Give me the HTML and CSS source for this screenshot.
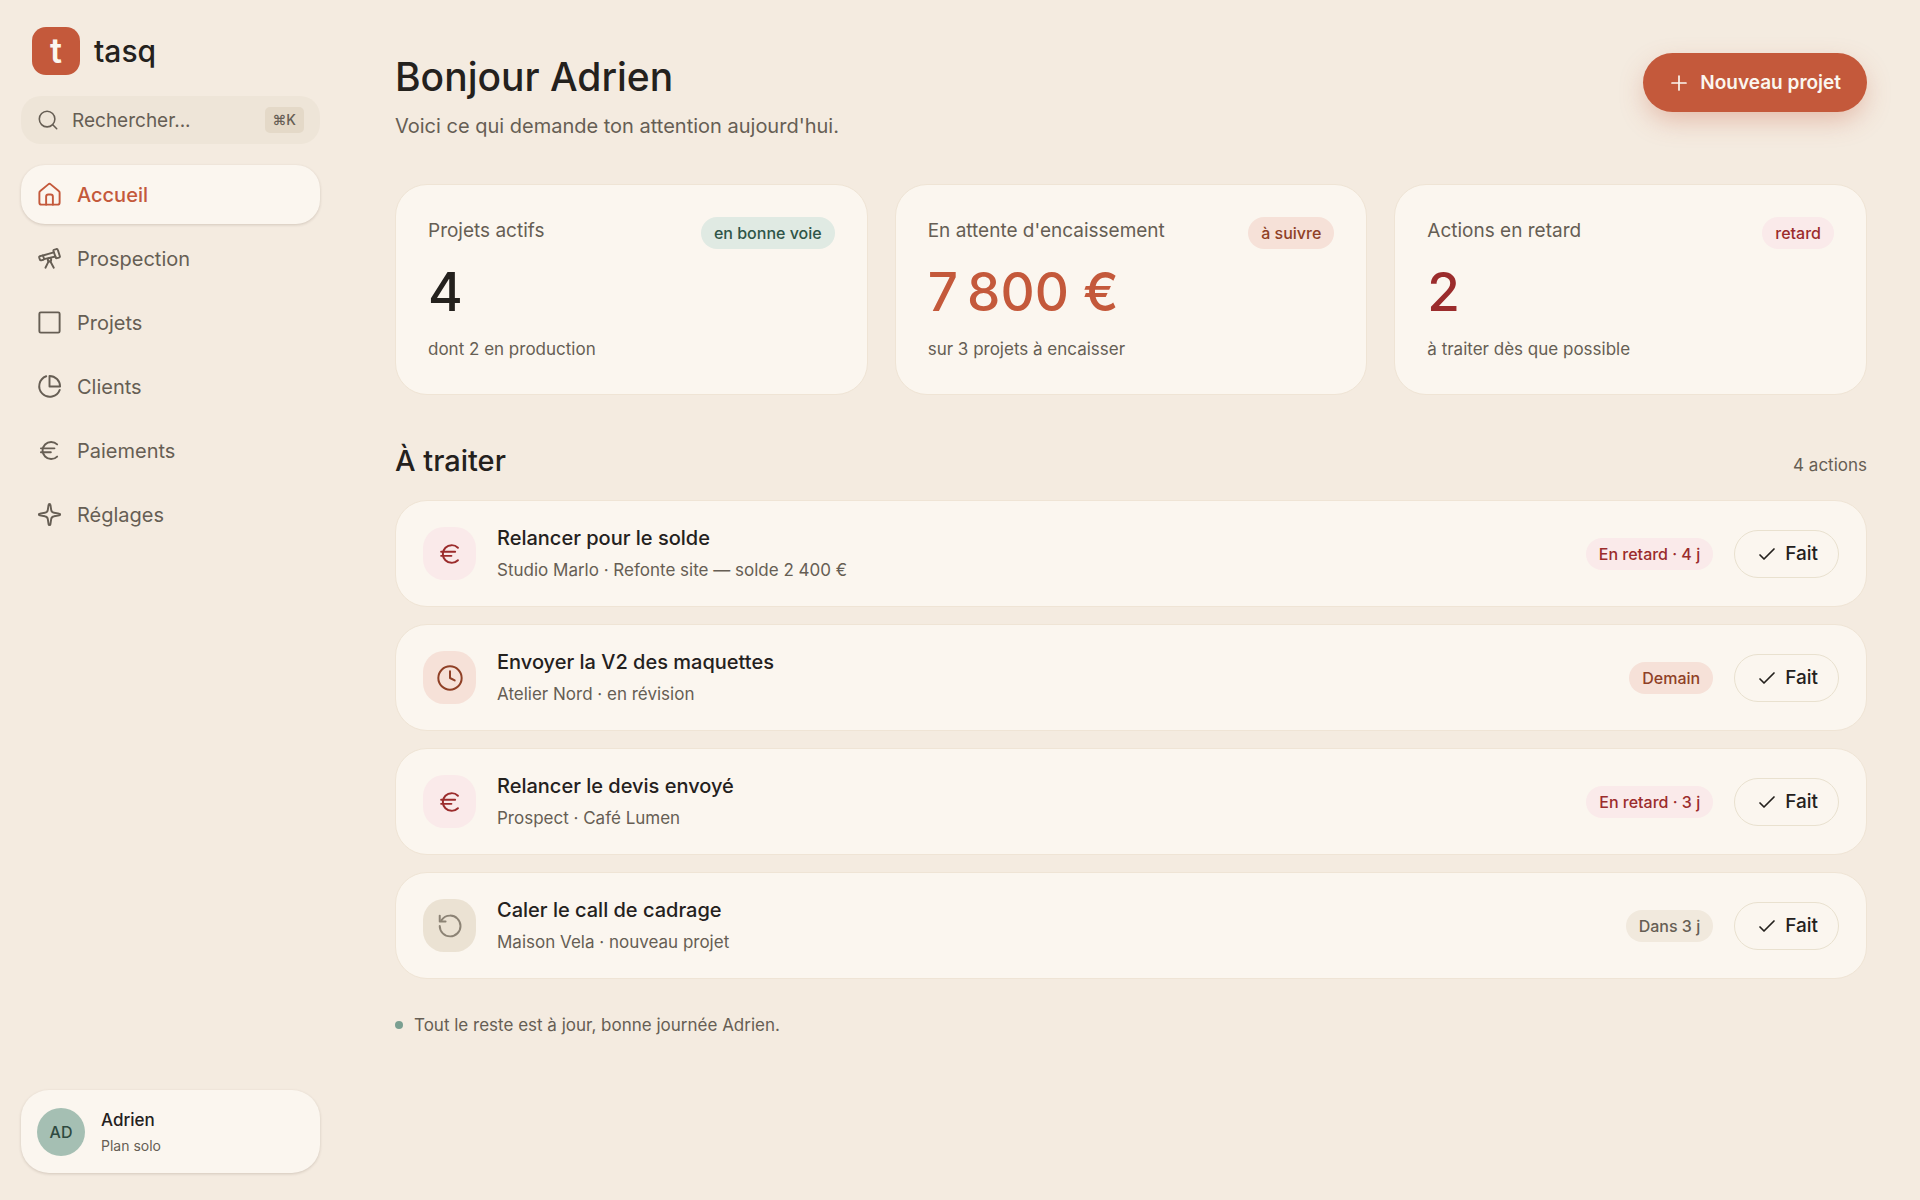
FILE: index.html
```html
<!DOCTYPE html>
<html lang="fr">
<head>
    <meta charset="UTF-8">
    <meta name="viewport" content="width=device-width, initial-scale=1.0">
    <title>tasq</title>
    <link rel="stylesheet" href="styles.css">
</head>
<body>
    <!-- icones partagees -->
    <svg class="sprite" aria-hidden="true">
        <symbol id="i-search" viewBox="0 0 24 24"><circle cx="11" cy="11" r="8.5"/><path d="M17.2 17.2 21.5 21.5"/></symbol>
        <symbol id="i-home" viewBox="0 0 24 24"><path d="M3 10.4a2 2 0 0 1 .8-1.6L10.9 3a1.7 1.7 0 0 1 2.2 0l7.1 5.8a2 2 0 0 1 .8 1.6V19a2 2 0 0 1-2 2H5a2 2 0 0 1-2-2z"/><path d="M9 21v-7a2 2 0 0 1 2-2h2a2 2 0 0 1 2 2v7"/></symbol>
        <symbol id="i-telescope" viewBox="0 0 24 24"><path d="M16.4 4.1 18.2 3.6a1 1 0 0 1 1.2.7l1.8 5.7a1 1 0 0 1-.7 1.2l-1.8.5a1 1 0 0 1-1.2-.7l-2-5.7a1 1 0 0 1 .9-1.2z"/><path d="M3.4 10 5.3 9.4a.9.9 0 0 1 1.1.6l.7 2a.9.9 0 0 1-.6 1.1l-1.9.5a.9.9 0 0 1-1.1-.6l-.7-1.9a.9.9 0 0 1 .6-1.1z"/><path d="M6.2 9.3 15.8 6.5M7.2 12.6l10.1-2.4"/><circle cx="12" cy="13.2" r="1.5"/><path d="M11.2 14.6 8.4 20.2M12.8 14.6l3 5.6"/></symbol>
        <symbol id="i-square" viewBox="0 0 24 24"><rect x="3" y="3" width="18" height="18" rx="1.2"/></symbol>
        <symbol id="i-pie" viewBox="0 0 24 24"><path d="M12 2.6a9.4 9.4 0 0 1 9.4 9.4H12z"/><path d="M9.1 2.9A9.4 9.4 0 1 0 21.1 15"/></symbol>
        <symbol id="i-euro" viewBox="0 0 24 24"><path d="M18.8 6.6A7.6 7.6 0 1 0 18.8 17.4M4.4 10.1h12M4.4 13.6h8.8"/></symbol>
        <symbol id="i-spark" viewBox="0 0 24 24"><path d="M11.2 3.3c.1-1 1.5-1 1.6 0l.7 4.6a3 3 0 0 0 2.6 2.6l4.6.7c1 .1 1 1.5 0 1.6l-4.6.7a3 3 0 0 0-2.6 2.6l-.7 4.6c-.1 1-1.5 1-1.6 0l-.7-4.6a3 3 0 0 0-2.6-2.6l-4.6-.7c-1-.1-1-1.5 0-1.6l4.6-.7a3 3 0 0 0 2.6-2.6z"/></symbol>
        <symbol id="i-clock" viewBox="0 0 24 24"><circle cx="12" cy="12" r="10"/><path d="M12 6.3V12L16 14.1"/></symbol>
        <symbol id="i-undo" viewBox="0 0 24 24"><path d="M3.2 12A8.9 8.9 0 1 0 12 3.1C9 3.1 6.3 4.6 4.6 7.2"/><path d="M3.2 3.1V8.1H8.2"/></symbol>
        <symbol id="i-check" viewBox="0 0 24 24"><path d="M5 13 9 17 19 7"/></symbol>
        <symbol id="i-plus" viewBox="0 0 24 24"><path d="M5 12h14M12 5v14"/></symbol>
    </svg>

    <aside class="sidebar">
        <a class="brand" href="#"><span class="brand-mark">t</span><span class="brand-name">tasq</span></a>

        <div class="search">
            <svg class="icon icon-search"><use href="#i-search"/></svg>
            <input type="text" id="recherche" placeholder="Rechercher..." aria-label="Rechercher">
            <kbd>⌘K</kbd>
        </div>

        <nav class="nav">
            <a class="nav-item active" href="#"><svg class="icon"><use href="#i-home"/></svg>Accueil</a>
            <a class="nav-item" href="#"><svg class="icon"><use href="#i-telescope"/></svg>Prospection</a>
            <a class="nav-item" href="#"><svg class="icon"><use href="#i-square"/></svg>Projets</a>
            <a class="nav-item" href="#"><svg class="icon"><use href="#i-pie"/></svg>Clients</a>
            <a class="nav-item" href="#"><svg class="icon"><use href="#i-euro"/></svg>Paiements</a>
            <a class="nav-item" href="#"><svg class="icon"><use href="#i-spark"/></svg>Réglages</a>
        </nav>

        <div class="user">
            <span class="avatar">AD</span>
            <div>
                <div class="user-name">Adrien</div>
                <div class="user-plan">Plan solo</div>
            </div>
        </div>
    </aside>

    <main class="main">
        <header class="header">
            <div>
                <h1>Bonjour Adrien</h1>
                <p class="subtitle">Voici ce qui demande ton attention aujourd'hui.</p>
            </div>
            <button class="btn-primary" type="button"><svg class="icon icon-small"><use href="#i-plus"/></svg>Nouveau projet</button>
        </header>

        <section class="stats">
            <div class="stat">
                <div class="stat-top"><span class="stat-label">Projets actifs</span><span class="badge green">en bonne voie</span></div>
                <div class="stat-value">4</div>
                <div class="stat-note">dont 2 en production</div>
            </div>
            <div class="stat">
                <div class="stat-top"><span class="stat-label">En attente d'encaissement</span><span class="badge orange">à suivre</span></div>
                <div class="stat-value text-orange">7&#8239;800 €</div>
                <div class="stat-note">sur 3 projets à encaisser</div>
            </div>
            <div class="stat">
                <div class="stat-top"><span class="stat-label">Actions en retard</span><span class="badge red">retard</span></div>
                <div class="stat-value text-red">2</div>
                <div class="stat-note">à traiter dès que possible</div>
            </div>
        </section>

        <section>
            <div class="section-head">
                <h2>À traiter</h2>
                <span class="count">4 actions</span>
            </div>
            <ul class="tasks">
                <li class="task">
                    <span class="task-icon red"><svg class="icon icon-task"><use href="#i-euro"/></svg></span>
                    <div class="task-text">
                        <div class="task-title">Relancer pour le solde</div>
                        <div class="task-sub">Studio Marlo · Refonte site — solde 2 400 €</div>
                    </div>
                    <span class="badge red">En retard · 4 j</span>
                    <button class="btn-done" type="button"><svg class="icon icon-small"><use href="#i-check"/></svg>Fait</button>
                </li>
                <li class="task">
                    <span class="task-icon orange"><svg class="icon icon-task"><use href="#i-clock"/></svg></span>
                    <div class="task-text">
                        <div class="task-title">Envoyer la V2 des maquettes</div>
                        <div class="task-sub">Atelier Nord · en révision</div>
                    </div>
                    <span class="badge orange">Demain</span>
                    <button class="btn-done" type="button"><svg class="icon icon-small"><use href="#i-check"/></svg>Fait</button>
                </li>
                <li class="task">
                    <span class="task-icon red"><svg class="icon icon-task"><use href="#i-euro"/></svg></span>
                    <div class="task-text">
                        <div class="task-title">Relancer le devis envoyé</div>
                        <div class="task-sub">Prospect · Café Lumen</div>
                    </div>
                    <span class="badge red">En retard · 3 j</span>
                    <button class="btn-done" type="button"><svg class="icon icon-small"><use href="#i-check"/></svg>Fait</button>
                </li>
                <li class="task">
                    <span class="task-icon sand"><svg class="icon icon-task"><use href="#i-undo"/></svg></span>
                    <div class="task-text">
                        <div class="task-title">Caler le call de cadrage</div>
                        <div class="task-sub">Maison Vela · nouveau projet</div>
                    </div>
                    <span class="badge neutral">Dans 3 j</span>
                    <button class="btn-done" type="button"><svg class="icon icon-small"><use href="#i-check"/></svg>Fait</button>
                </li>
            </ul>
        </section>

        <p class="all-good"><span class="dot"></span>Tout le reste est à jour, bonne journée Adrien.</p>
    </main>
</body>
</html>
```

FILE: styles.css
```css
:root{
    --bg: #f4ebe0;
    --card: #fbf6ef;
    --line: #efe4d5;
    --ink: #24211d;
    --muted: #665e54;
    --accent: #c4593b;
}
*{
    box-sizing: border-box;
}
body{
    margin: 0;
    min-height: 100vh;
    display: flex;
    background-color: var(--bg);
    color: var(--ink);
    font-family: Inter, "Liberation Sans", sans-serif;
    font-size: 20px;
}
h1, h2, p, ul{
    margin: 0;
    padding: 0;
}
a{
    color: inherit;
    text-decoration: none;
}
button, input{
    font-family: inherit;
}
.sprite{
    display: none;
}
.icon{
    width: 27px;
    height: 27px;
    flex-shrink: 0;
    fill: none;
    stroke: currentColor;
    stroke-width: 1.7;
    stroke-linecap: round;
    stroke-linejoin: round;
}
.icon-small{
    width: 24px;
    height: 24px;
}
.icon-task{
    width: 28px;
    height: 28px;
}

/* barre laterale */
.sidebar{
    width: 341px;
    flex-shrink: 0;
    padding: 27px 21px;
    display: flex;
    flex-direction: column;
}
.brand{
    display: flex;
    align-items: center;
    gap: 14px;
    padding-left: 11px;
    margin-bottom: 21px;
}
.brand-mark{
    width: 48px;
    height: 48px;
    border-radius: 14px;
    background-color: var(--accent);
    color: var(--card);
    font-size: 34px;
    font-weight: 600;
    line-height: 48px;
    text-align: center;
}
.brand-name{
    font-size: 30px;
    font-weight: 500;
}
.search{
    display: flex;
    align-items: center;
    height: 48px;
    padding: 0 16px;
    gap: 13px;
    border-radius: 20px;
    background-color: #eee5d8;
    color: var(--muted);
    margin-bottom: 21px;
}
.icon-search{
    width: 22px;
    height: 22px;
}
.search input{
    flex: 1;
    min-width: 0;
    border: 0;
    padding: 0;
    background: none;
    outline: none;
    font-size: 19px;
}
.search input::placeholder{
    color: var(--muted);
}
kbd{
    height: 26px;
    padding: 0 8px;
    border-radius: 5px;
    background-color: #e4d9c8;
    font-family: inherit;
    font-size: 14px;
    font-weight: 500;
    line-height: 26px;
}
.nav{
    display: flex;
    flex-direction: column;
    gap: 5px;
}
.nav-item{
    display: flex;
    align-items: center;
    gap: 14px;
    height: 59px;
    padding: 0 15px;
    border-radius: 24px;
    color: var(--muted);
}
.nav-item.active{
    background-color: var(--card);
    color: var(--accent);
    font-weight: 500;
    box-shadow: 0 1px 3px rgba(60, 40, 20, 0.18);
}
.user{
    margin-top: auto;
    display: flex;
    align-items: center;
    gap: 16px;
    height: 83px;
    padding: 0 16px;
    border-radius: 28px;
    background-color: var(--card);
    box-shadow: 0 1px 3px rgba(60, 40, 20, 0.18);
}
.avatar{
    width: 48px;
    height: 48px;
    border-radius: 50%;
    background-color: #a5bfb3;
    color: #2f4a40;
    font-size: 16px;
    font-weight: 500;
    line-height: 48px;
    text-align: center;
}
.user-name{
    font-size: 17px;
    font-weight: 500;
    line-height: 28px;
}
.user-plan{
    font-size: 14px;
    line-height: 24px;
    color: var(--muted);
}

/* contenu */
.main{
    flex: 1;
    min-width: 0;
    padding: 53px 53px 53px 54px;
}
.header{
    display: flex;
    justify-content: space-between;
    align-items: flex-start;
    margin-bottom: 42px;
}
h1{
    font-size: 39px;
    font-weight: 500;
    line-height: 48px;
}
.subtitle{
    margin-top: 9px;
    line-height: 32px;
    color: var(--muted);
}
.btn-primary{
    display: flex;
    align-items: center;
    gap: 9px;
    height: 59px;
    padding: 0 26px 0 24px;
    border: 0;
    border-radius: 30px;
    background-color: var(--accent);
    color: var(--card);
    font-size: 19px;
    font-weight: 600;
    box-shadow: 0 10px 27px -3px rgba(196, 89, 59, 0.35);
}
.stats{
    display: grid;
    grid-template-columns: repeat(3, 1fr);
    gap: 27px;
    margin-bottom: 42px;
}
.stat{
    padding: 32px 32px 31px;
    border: 1px solid var(--line);
    border-radius: 32px;
    background-color: var(--card);
}
.stat-top{
    display: flex;
    justify-content: space-between;
    align-items: flex-start;
}
.stat-label{
    font-size: 19px;
    line-height: 28px;
    color: var(--muted);
}
.stat-value{
    margin-top: 14px;
    font-size: 53px;
    font-weight: 500;
    line-height: 58px;
}
.stat-note{
    margin-top: 14px;
    font-size: 17px;
    line-height: 28px;
    color: var(--muted);
}
.text-orange{
    color: var(--accent);
}
.text-red{
    color: #9b2c2c;
}
.badge{
    height: 32px;
    padding: 0 13px;
    border-radius: 16px;
    font-size: 16px;
    font-weight: 500;
    line-height: 32px;
    white-space: nowrap;
}
.green{
    background-color: #e0eae3;
    color: #2f5548;
}
.orange{
    background-color: #f6e1d8;
    color: #8f4026;
}
.red{
    background-color: #faeaea;
    color: #9b2c2c;
}
.neutral{
    background-color: #f1e9dd;
    color: var(--muted);
}
.sand{
    background-color: #ebe2d3;
    color: #8c8375;
}
.section-head{
    display: flex;
    justify-content: space-between;
    align-items: baseline;
    margin-bottom: 15px;
}
h2{
    font-size: 29px;
    font-weight: 500;
    line-height: 48px;
}
.count{
    font-size: 17px;
    color: var(--muted);
}
.tasks{
    display: flex;
    flex-direction: column;
    gap: 17px;
    list-style: none;
}
.task{
    display: flex;
    align-items: center;
    height: 107px;
    padding: 0 27px;
    border: 1px solid var(--line);
    border-radius: 32px;
    background-color: var(--card);
}
.task-icon{
    display: flex;
    align-items: center;
    justify-content: center;
    width: 53px;
    height: 53px;
    border-radius: 21px;
}
.task-text{
    flex: 1;
    margin-left: 21px;
}
.task-title{
    font-weight: 500;
    line-height: 32px;
}
.task-sub{
    font-size: 17px;
    line-height: 32px;
    color: var(--muted);
}
.btn-done{
    display: flex;
    align-items: center;
    gap: 6px;
    height: 48px;
    margin-left: 21px;
    padding: 0 20px;
    border: 1px solid #e9e1cf;
    border-radius: 24px;
    background: none;
    color: var(--ink);
    font-size: 19px;
    font-weight: 500;
}
.all-good{
    display: flex;
    align-items: center;
    gap: 11px;
    margin-top: 32px;
    font-size: 17px;
    line-height: 28px;
    color: var(--muted);
}
.dot{
    width: 8px;
    height: 8px;
    border-radius: 50%;
    background-color: #7a9f91;
}
```
